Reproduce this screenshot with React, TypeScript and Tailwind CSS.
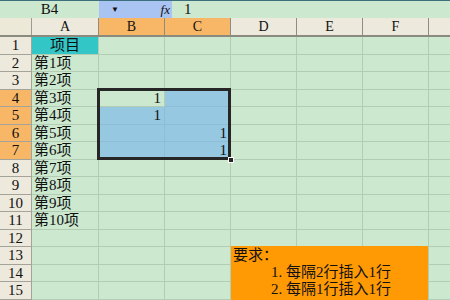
import React from "react";

const COLS = ["A", "B", "C", "D", "E", "F", "G"];
const COL_W = [67, 66, 66, 66, 66, 66, 66];
const ROW_H = 17.5;

const colA: Record<number, string> = {
  2: "第1项",
  3: "第2项",
  4: "第3项",
  5: "第4项",
  6: "第5项",
  7: "第6项",
  8: "第7项",
  9: "第8项",
  10: "第9项",
  11: "第10项",
};

const values: Record<string, string> = {
  B4: "1",
  B5: "1",
  C6: "1",
  C7: "1",
};

const inSelection = (col: string, row: number) =>
  (col === "B" || col === "C") && row >= 4 && row <= 7;

function FormulaBar() {
  return (
    <div className="flex h-[18px] border-t border-[#3d6f7c] bg-[#cce8cf] text-[15px] leading-[17px]">
      <div className="w-[99px] text-center">B4</div>
      <div className="flex w-[73px] items-center justify-between bg-[#a9c3f2] pl-[12px] pr-[2px]">
        <span className="text-[8px] leading-none">▼</span>
        <span className="italic text-[13px]">fx</span>
      </div>
      <div className="pl-[12px]">1</div>
    </div>
  );
}

function HeaderRow() {
  return (
    <div className="flex h-[19px] border-b-2 border-[#8a8a7f]">
      <div className="w-[32px] shrink-0 border-r border-[#9c9c94] bg-[#ece9d8]" />
      {COLS.map((c, i) => {
        const hl = c === "B" || c === "C";
        return (
          <div
            key={c}
            style={{ width: COL_W[i] }}
            className={`shrink-0 border-r border-[#8d8d86] text-center text-[14px] leading-[18px] ${
              hl ? "bg-[#f8b766]" : "bg-[#eee9dd]"
            }`}
          >
            {c === "G" ? "" : c}
          </div>
        );
      })}
    </div>
  );
}

function Row({ n }: { n: number }) {
  const rowHl = n >= 4 && n <= 7;
  return (
    <div className="flex" style={{ height: ROW_H }}>
      <div
        className={`w-[32px] shrink-0 border-r border-b border-[#a3a39a] text-center text-[15px] leading-[17px] ${
          rowHl ? "bg-[#f8b766]" : "bg-[#eee9dd]"
        }`}
      >
        {n}
      </div>
      {COLS.map((c, i) => {
        const key = `${c}${n}`;
        const sel = inSelection(c, n) && key !== "B4";
        let cls = "bg-[#cce8cf]";
        let text = "";
        let align = "text-left pl-[2px]";
        if (c === "A" && n === 1) {
          cls = "bg-[#33c6c6]";
          text = "项目";
          align = "text-center";
        } else if (c === "A" && colA[n]) {
          text = colA[n];
        } else if (values[key]) {
          text = values[key];
          align = "text-right pr-[3px]";
        }
        if (sel) cls = "bg-[#97c8e2]";
        return (
          <div
            key={c}
            style={{ width: COL_W[i] }}
            className={`shrink-0 overflow-visible whitespace-nowrap border-r border-b text-[15px] leading-[17px] ${
              sel ? "border-[#8fbdd4]" : "border-[#b3cdb5]"
            } ${cls} ${align}`}
          >
            {text}
          </div>
        );
      })}
    </div>
  );
}

export default function App() {
  const rows = Array.from({ length: 15 }, (_, i) => i + 1);
  return (
    <div
      className="h-[300px] w-[450px] overflow-hidden bg-[#cce8cf] text-[#111]"
      style={{ fontFamily: '"Liberation Serif", "Noto Sans CJK SC", serif' }}
    >
      <FormulaBar />
      <HeaderRow />
      <div className="relative">
        {rows.map((n) => (
          <Row key={n} n={n} />
        ))}

        {/* selection outline B4:C7 */}
        <div className="absolute left-[97px] top-[51px] h-[72px] w-[134px] border-[3px] border-[#262626]" />
        <div className="absolute left-[228px] top-[120px] h-[6px] w-[6px] border border-white bg-[#262626]" />

        {/* text box */}
        <div className="absolute left-[231px] top-[209px] h-[60px] w-[197px] bg-[#ff9a05] pl-[2px] pt-[1px] text-[15px] leading-[17px]">
          <div>要求：</div>
          <div className="pl-[38px]">1. 每隔2行插入1行</div>
          <div className="pl-[38px]">2. 每隔1行插入1行</div>
        </div>
      </div>
    </div>
  );
}
